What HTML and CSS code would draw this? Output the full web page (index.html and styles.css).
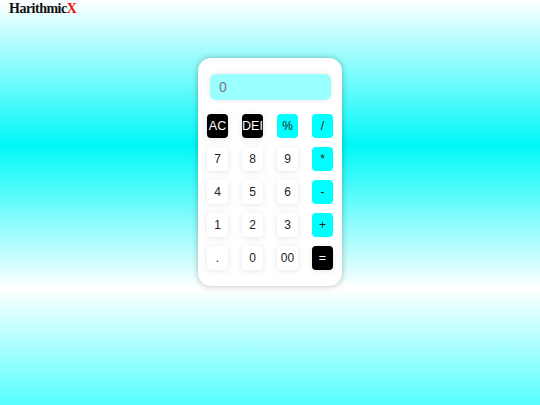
FILE: index.html
```html
<!DOCTYPE html>
<html>
<head>
<meta charset="utf-8">
<link rel="stylesheet" href="styles.css">
</head>
<body>
<h1 class="logo">Harithmic<span class="x">X</span></h1>
<main class="stage">
  <div class="calc">
    <div class="display">0</div>
    <div class="keys">
      <button class="key dark">AC</button>
      <button class="key dark">DEI</button>
      <button class="key op">%</button>
      <button class="key op">/</button>
      <button class="key">7</button>
      <button class="key">8</button>
      <button class="key">9</button>
      <button class="key op">*</button>
      <button class="key">4</button>
      <button class="key">5</button>
      <button class="key">6</button>
      <button class="key op">-</button>
      <button class="key">1</button>
      <button class="key">2</button>
      <button class="key">3</button>
      <button class="key op">+</button>
      <button class="key">.</button>
      <button class="key">0</button>
      <button class="key">00</button>
      <button class="key dark">=</button>
    </div>
  </div>
</main>
</body>
</html>
```
FILE: styles.css
```css
html {
  height: 100%;
  background: linear-gradient(to bottom, #ffffff 0px, #00f8f8 145px, #ffffff 288px, #55ffff 405px);
}
body {
  margin: 0;
  height: 405px;
  overflow: hidden;
}
.logo {
  margin: 0;
  padding: 1px 0 0 9px;
  font-family: "Liberation Serif", serif;
  font-weight: bold;
  font-size: 14px;
  letter-spacing: -0.5px;
  line-height: 16px;
  color: #111;
}
.x { color: #ee1111; }
.stage {
  display: flex;
  justify-content: center;
  padding-top: 41px;
}
.calc {
  width: 144px;
  box-sizing: border-box;
  background: #fff;
  border-radius: 13px;
  box-shadow: 0 0 6px rgba(0,0,0,0.28);
  padding: 16px 9px 16px 9px;
}
.display {
  margin: 0 2px 14px 3px;
  height: 26px;
  border-radius: 6px;
  background: #99ffff;
  box-shadow: 0 0 5px rgba(0,0,0,0.1);
  font-family: "Liberation Sans", Arial, sans-serif;
  font-size: 14px;
  line-height: 26px;
  padding-left: 9px;
  color: #777;
}
.keys {
  display: grid;
  grid-template-columns: repeat(4, 21px);
  grid-auto-rows: 24px;
  column-gap: 14px;
  row-gap: 9px;
}
.key {
  border: none;
  padding: 0;
  margin: 0;
  border-radius: 4px;
  background: #fff;
  box-shadow: 0 1px 6px rgba(0,0,0,0.1);
  font-family: "Liberation Sans", Arial, sans-serif;
  font-size: 12px;
  color: #222;
}
.key.dark {
  background: #000;
  color: #fff;
  font-size: 12.5px;
}
.key.op {
  background: #00ffff;
  box-shadow: none;
}
```
